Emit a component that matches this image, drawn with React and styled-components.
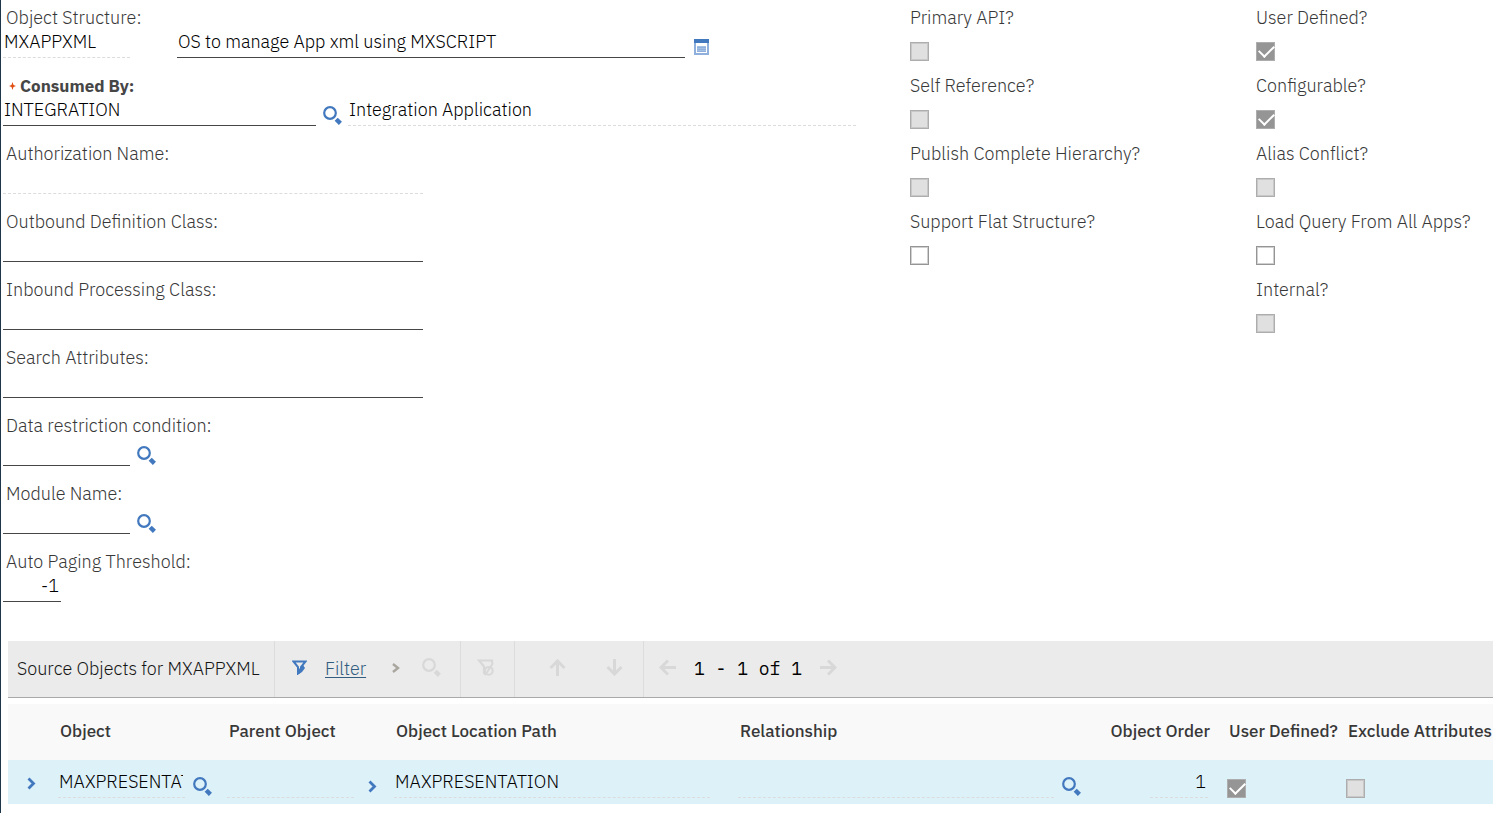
import React, { useId } from "react";
import styled, { createGlobalStyle } from "styled-components";

const GlobalStyle = createGlobalStyle`
  * { box-sizing: border-box; }
  body {
    margin: 0;
    background: #fff;
    color: #383838;
    font-family: "IBM Plex Sans", Roboto, "Liberation Sans", sans-serif;
    font-size: 18px;
    font-weight: 300;
    line-height: 24px;
    overflow-x: hidden;
  }
`;

const Page = styled.main`
  min-height: 100vh;
  border-left: 1px solid #1d3649;
`;

const Details = styled.form`
  display: grid;
  grid-template-columns: 907fr 346fr 237fr;
  padding: 6px 0 0 2px;
`;

const Column = styled.div`
  display: flex;
  flex-direction: column;
  gap: 16px;
  min-width: 0;
`;

const Field = styled.div`
  display: flex;
  flex-direction: column;
`;

const Label = styled.label`
  display: flex;
  align-items: center;
  gap: 4px;
  height: 24px;
  padding-left: ${(p) => (p.$required ? 6 : 3)}px;
  color: ${(p) => (p.$required ? "#464646" : "inherit")};
  font-size: ${(p) => (p.$required ? 17 : 18)}px;
  font-weight: ${(p) => (p.$required ? 700 : 300)};
  white-space: nowrap;
`;

const Controls = styled.div`
  display: flex;
  align-items: flex-end;
`;

const TextInput = styled.input`
  width: ${(p) => p.$width}px;
  height: 28px;
  margin: 0;
  padding: 0 2px 4px 1px;
  border: 0;
  border-bottom: 1px ${(p) => (p.readOnly ? "dashed #dcdcdc" : "solid #464646")};
  border-radius: 0;
  outline: 0;
  background: transparent;
  color: #000;
  font: inherit;
  text-align: ${(p) => p.$align || "left"};
`;

const IconButton = styled.button`
  display: flex;
  flex: none;
  margin: 0;
  padding: 0;
  border: 0;
  background: transparent;
  cursor: pointer;
`;

const FieldIcon = styled(IconButton)`
  margin: 0 6px 1px 7px;
`;

const DetailIcon = styled(IconButton)`
  margin: 0 9px 3px;
`;

const CellIcon = styled(IconButton)`
  margin: 0 0 2px 8px;
`;

const CellChevron = styled(IconButton)`
  margin: 0 0 5px 14px;
`;

const Spacer = styled.span`
  width: 47px;
`;

const CheckField = styled.div`
  display: flex;
  flex-direction: column;
  gap: 12px;
  height: 52px;
`;

const CheckLabel = styled.label`
  height: 24px;
  white-space: nowrap;
`;

const Checkbox = styled.input.attrs({ type: "checkbox" })`
  appearance: none;
  position: relative;
  flex: none;
  width: 19px;
  height: 19px;
  margin: 0;
  border: 1px solid ${(p) => (p.disabled ? "#adadad" : "#959595")};
  box-shadow: inset 0 0 0 1px ${(p) => (p.disabled ? "#c8c8c8" : "#d0d0d0")};
  background: ${(p) => (p.disabled ? "#e0e0e0" : "#fff")};

  &:checked {
    background: #959595;
    box-shadow: none;
  }
  &:checked::after {
    content: "";
    position: absolute;
    left: 2px;
    top: 2px;
    width: 13px;
    height: 7px;
    border: solid #fff;
    border-width: 0 0 2px 2px;
    transform: rotate(-45deg);
  }
`;

const TableSection = styled.section`
  margin: 39px 0 0 7px;
`;

const Toolbar = styled.header`
  display: flex;
  height: 57px;
  background: #ebebeb;
  border-bottom: 1px solid #a9a9a9;
`;

const ToolGroup = styled.div`
  display: flex;
  align-items: center;
  flex: none;
  gap: ${(p) => p.$gap || 0}px;
  width: ${(p) => p.$width}px;
  padding-left: ${(p) => p.$pad}px;
  padding-bottom: 3px;
  border-right: 1px solid #dcdcdc;

  &:last-child { width: auto; border-right: 0; }
`;

const Title = styled.h2`
  margin: 0;
  padding-top: 3px;
  color: #161616;
  font-size: 18px;
  font-weight: 300;
  white-space: nowrap;
`;

const FilterGroup = styled.div`
  display: flex;
  align-items: center;
  gap: 18px;
  margin-right: 4px;
`;

const FilterLink = styled.a`
  padding-top: 3px;
  color: #325c80;
  text-decoration: underline;
  text-decoration-thickness: 1px;
  text-underline-offset: 2px;
`;

const MoveButton = styled(IconButton)`
  flex: 1;
  justify-content: center;
`;

const PageCount = styled.span`
  padding-top: 3px;
  color: #000;
  font-family: "IBM Plex Mono", "Liberation Mono", monospace;
  font-weight: 400;
  white-space: nowrap;
`;

const Table = styled.table`
  width: 100%;
  margin-top: 6px;
  border-collapse: collapse;
  table-layout: fixed;
`;

const Th = styled.th`
  height: 56px;
  padding: 0 ${(p) => (p.$align ? 17 : 0)}px 2px 2px;
  background: #f9f9f9;
  font-size: 17px;
  font-weight: 500;
  text-align: ${(p) => p.$align || "left"};
  white-space: nowrap;
`;

const Td = styled.td`
  height: 44px;
  padding: 0 0 6px;
  background: #ddf1f9;
  vertical-align: bottom;
`;

const Cell = styled(Controls)`
  justify-content: ${(p) => (p.$end ? "flex-end" : "flex-start")};
  padding-right: ${(p) => (p.$end ? 19 : 0)}px;
`;

const ExpandCell = styled(Controls)`
  padding: 0 0 8px 19px;
`;

const Glyph = ({ w, h, color = "#4178be", children }) => (
  <svg width={w} height={h} viewBox={`0 0 ${w} ${h}`} fill="none" stroke={color} aria-hidden="true">
    {children}
  </svg>
);

const SearchIcon = ({ color }) => (
  <Glyph w={19} h={19} color={color}>
    <circle cx="7" cy="7" r="5.800" strokeWidth="2.200" />
    <path d="M13.200 13.200l4.200 4.200" strokeWidth="4.400" />
  </Glyph>
);

const Chevron = ({ color }) => (
  <Glyph w={9} h={13} color={color}>
    <path d="M1.500 1.500l5 5-5 5" strokeWidth="2.800" />
  </Glyph>
);

const SmallChevron = () => (
  <Glyph w={8} h={10} color="#a8a69e">
    <path d="M1 1l5 4L1 9" strokeWidth="2.400" />
  </Glyph>
);

const ArrowIcon = ({ turn = 0 }) => (
  <Glyph w={17} h={17} color="#d8d8d8">
    <path d="M8.500 17V3M1.500 9l7-7 7 7" strokeWidth="3" transform={`rotate(${turn} 8.500 8.500)`} />
  </Glyph>
);

const DescriptionIcon = () => (
  <Glyph w={15} h={16}>
    <path d="M1 3v12h13V3" stroke="#8fb0dc" strokeWidth="2" />
    <path d="M0 2h15" strokeWidth="4" />
    <path d="M3 7h9v6H3z" fill="#a3bfe4" stroke="none" />
    <path d="M3 8.500h9M3 10.500h9M3 12.500h9" stroke="#8fb0dc" />
  </Glyph>
);

const FilterIcon = () => (
  <Glyph w={15} h={15}>
    <path d="M1.500 1.500h12L9 7v3.500L6 13.500V7z" strokeWidth="2" />
    <path d="M7 14V9l4-4 2 3-3 4z" fill="#4178be" stroke="none" />
  </Glyph>
);

const ClearFilterIcon = () => (
  <Glyph w={17} h={17} color="#d8d8d8">
    <path d="M15 4V1.500H2L7 7.500V14l2 2" strokeWidth="2.200" />
    <circle cx="11.800" cy="11.800" r="3.900" strokeWidth="2" />
    <path d="M9.500 14L16 4" strokeWidth="2" />
  </Glyph>
);

const RequiredMark = () => (
  <svg width="7" height="8" viewBox="0 0 7 8" aria-hidden="true">
    <path d="M3.500 0l1 3 2.500 1-2.500 1-1 3-1-3L0 4l2.500-1z" fill="#e04e12" />
  </svg>
);

function TextField({ label, value = "", width, readOnly, required, align, lookup, children }) {
  const id = useId();
  return (
    <Field>
      <Label htmlFor={id} $required={required}>
        {required && <RequiredMark />}
        {label}
      </Label>
      <Controls>
        <TextInput id={id} defaultValue={value} $width={width} $align={align} readOnly={readOnly} />
        {lookup && (
          <FieldIcon type="button" aria-label={`Select ${lookup}`}>
            <SearchIcon />
          </FieldIcon>
        )}
        {children}
      </Controls>
    </Field>
  );
}

function CheckItem({ label, checked = false, disabled }) {
  const id = useId();
  return (
    <CheckField>
      <CheckLabel htmlFor={id}>{label}</CheckLabel>
      <Checkbox id={id} defaultChecked={checked} disabled={disabled} />
    </CheckField>
  );
}

const COLUMNS = [
  { name: "", width: 50 },
  { name: "Object", width: 169 },
  { name: "Parent Object", width: 167 },
  { name: "Object Location Path", width: 344 },
  { name: "Relationship", width: 368 },
  { name: "Object Order", width: 121, align: "right" },
  { name: "User Defined?", width: 119 },
  { name: "Exclude Attributes" },
];

export default function App() {
  return (
    <>
      <GlobalStyle />
      <Page>
        <Details>
          <Column>
            <TextField label="Object Structure:" value="MXAPPXML" width={127} readOnly>
              <Spacer />
              <TextInput
                aria-label="Object structure description"
                defaultValue="OS to manage App xml using MXSCRIPT"
                $width={508}
              />
              <DetailIcon type="button" aria-label="Long description">
                <DescriptionIcon />
              </DetailIcon>
            </TextField>
            <TextField label="Consumed By:" value="INTEGRATION" width={313} required lookup="consumer">
              <TextInput
                aria-label="Consumer description"
                defaultValue="Integration Application"
                $width={508}
                readOnly
              />
            </TextField>
            <TextField label="Authorization Name:" width={420} readOnly />
            <TextField label="Outbound Definition Class:" width={420} />
            <TextField label="Inbound Processing Class:" width={420} />
            <TextField label="Search Attributes:" width={420} />
            <TextField label="Data restriction condition:" width={127} lookup="condition" />
            <TextField label="Module Name:" width={127} lookup="module" />
            <TextField label="Auto Paging Threshold:" value="-1" width={58} align="right" />
          </Column>
          <Column>
            <CheckItem label="Primary API?" disabled />
            <CheckItem label="Self Reference?" disabled />
            <CheckItem label="Publish Complete Hierarchy?" disabled />
            <CheckItem label="Support Flat Structure?" />
          </Column>
          <Column>
            <CheckItem label="User Defined?" checked disabled />
            <CheckItem label="Configurable?" checked disabled />
            <CheckItem label="Alias Conflict?" disabled />
            <CheckItem label="Load Query From All Apps?" />
            <CheckItem label="Internal?" disabled />
          </Column>
        </Details>

        <TableSection>
          <Toolbar>
            <ToolGroup $width={267} $pad={9}>
              <Title>Source Objects for MXAPPXML</Title>
            </ToolGroup>
            <ToolGroup $width={186} $pad={17} $gap={22}>
              <FilterGroup>
                <FilterIcon />
                <FilterLink href="#filter">Filter</FilterLink>
              </FilterGroup>
              <IconButton type="button" aria-label="Expand filter">
                <SmallChevron />
              </IconButton>
              <IconButton type="button" aria-label="Find">
                <SearchIcon color="#d8d8d8" />
              </IconButton>
            </ToolGroup>
            <ToolGroup $width={54} $pad={16}>
              <IconButton type="button" aria-label="Clear filter">
                <ClearFilterIcon />
              </IconButton>
            </ToolGroup>
            <ToolGroup $width={129} $pad={14}>
              <MoveButton type="button" aria-label="Previous row">
                <ArrowIcon />
              </MoveButton>
              <MoveButton type="button" aria-label="Next row">
                <ArrowIcon turn={180} />
              </MoveButton>
            </ToolGroup>
            <ToolGroup $pad={15} $gap={18}>
              <IconButton type="button" aria-label="Previous page">
                <ArrowIcon turn={-90} />
              </IconButton>
              <PageCount>1 - 1 of 1</PageCount>
              <IconButton type="button" aria-label="Next page">
                <ArrowIcon turn={90} />
              </IconButton>
            </ToolGroup>
          </Toolbar>

          <Table>
            <colgroup>
              {COLUMNS.map((c) => (
                <col key={c.name} width={c.width} />
              ))}
            </colgroup>
            <thead>
              <tr>
                {COLUMNS.map((c) => (
                  <Th key={c.name} scope="col" $align={c.align}>
                    {c.name}
                  </Th>
                ))}
              </tr>
            </thead>
            <tbody>
              <tr>
                <Td>
                  <ExpandCell>
                    <IconButton type="button" aria-label="Show row details">
                      <Chevron />
                    </IconButton>
                  </ExpandCell>
                </Td>
                <Td>
                  <Cell>
                    <TextInput aria-label="Object" defaultValue="MAXPRESENTATION" $width={127} readOnly />
                    <CellIcon type="button" aria-label="Select object">
                      <SearchIcon />
                    </CellIcon>
                  </Cell>
                </Td>
                <Td>
                  <Cell>
                    <TextInput aria-label="Parent object" $width={127} readOnly />
                    <CellChevron type="button" aria-label="Parent object menu">
                      <Chevron />
                    </CellChevron>
                  </Cell>
                </Td>
                <Td>
                  <Cell>
                    <TextInput
                      aria-label="Object location path"
                      defaultValue="MAXPRESENTATION"
                      $width={316}
                      readOnly
                    />
                  </Cell>
                </Td>
                <Td>
                  <Cell>
                    <TextInput aria-label="Relationship" $width={316} readOnly />
                    <CellIcon type="button" aria-label="Select relationship">
                      <SearchIcon />
                    </CellIcon>
                  </Cell>
                </Td>
                <Td>
                  <Cell $end>
                    <TextInput aria-label="Object order" defaultValue="1" $width={58} $align="right" readOnly />
                  </Cell>
                </Td>
                <Td>
                  <Cell>
                    <Checkbox aria-label="User defined" defaultChecked disabled />
                  </Cell>
                </Td>
                <Td>
                  <Cell>
                    <Checkbox aria-label="Exclude attributes" disabled />
                  </Cell>
                </Td>
              </tr>
            </tbody>
          </Table>
        </TableSection>
      </Page>
    </>
  );
}
